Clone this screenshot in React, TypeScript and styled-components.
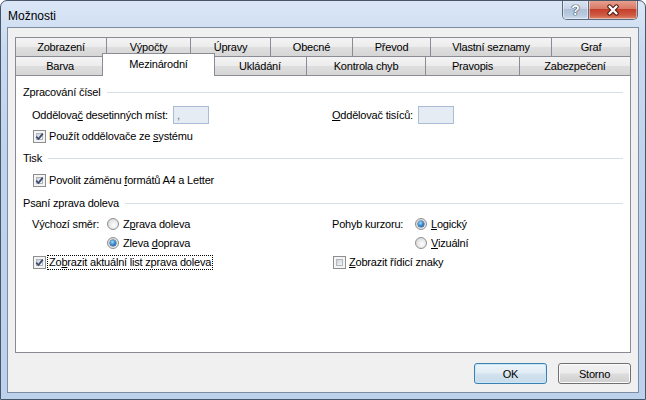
import React from "react";
import styled, { createGlobalStyle } from "styled-components";

const GlobalStyle = createGlobalStyle`
  html, body {
    margin: 0;
    padding: 0;
    background: #ffffff;
  }
  body {
    font-family: "Liberation Sans", Arial, sans-serif;
    font-size: 11px;
    letter-spacing: -0.2px;
    color: #000;
  }
`;

const Window = styled.div`
  width: 646px;
  height: 400px;
  box-sizing: border-box;
  border: 1px solid #48566a;
  border-radius: 7px 7px 0 0;
  background: linear-gradient(180deg, #dbe7f6 0%, #c9daf0 12%, #bfd3ed 40%, #bcd1ec 100%);
  display: flex;
  flex-direction: column;
  overflow: hidden;
`;

const TitleBar = styled.div`
  height: 26px;
  display: flex;
  align-items: flex-start;
  padding: 0 6px 0 7px;
  flex: none;
`;

const Title = styled.div`
  flex: 1;
  margin-top: 7px;
  font-size: 12px;
  letter-spacing: 0;
  line-height: 16px;
  color: #000;
`;

const Captions = styled.div`
  display: flex;
  margin-top: -1px;
  margin-right: 1px;
  border: 1px solid #5b6a7e;
  border-top: none;
  border-radius: 0 0 5px 5px;
  overflow: hidden;
`;

const CaptionButton = styled.div<{ $close?: boolean }>`
  width: ${(p) => (p.$close ? 48 : 25)}px;
  height: 19px;
  display: flex;
  align-items: center;
  justify-content: center;
  box-shadow: inset 0 0 0 1px rgba(255, 255, 255, 0.45);
  background: ${(p) =>
    p.$close
      ? "linear-gradient(180deg, #e9a593 0%, #d87a66 45%, #c63f2b 50%, #cf5a43 80%, #e0876b 100%)"
      : "linear-gradient(180deg, #dde7f3 0%, #c6d4e6 45%, #aebfd6 50%, #b9cbe1 80%, #cfdcec 100%)"};
  & + & {
    border-left: 1px solid #5b6a7e;
  }
`;

const HelpGlyph = styled.span`
  font-family: "Liberation Sans", Arial, sans-serif;
  font-weight: bold;
  font-size: 14px;
  line-height: 14px;
  color: #ffffff;
  text-shadow: 0 0 1px #2c3a4c, 0 0 1px #2c3a4c, 0 0 1px #2c3a4c;
`;

const Client = styled.div`
  flex: 1;
  margin: 0 6px 6px 6px;
  border: 1px solid #7d8ca2;
  background: #f0f0f0;
  padding: 9px 7px 0 7px;
  display: flex;
  flex-direction: column;
`;

const TabRow = styled.div`
  display: flex;
  height: 19px;
  flex: none;
`;

const Tab = styled.div<{ $w: number; $active?: boolean; $last?: boolean }>`
  box-sizing: border-box;
  flex: none;
  width: ${(p) => (p.$active ? p.$w + 4 : p.$w)}px;
  height: ${(p) => (p.$active ? 23 : 19)}px;
  margin: ${(p) => (p.$active ? "-3px -2px -1px -2px" : "0")};
  position: relative;
  z-index: ${(p) => (p.$active ? 2 : 1)};
  border-top: 1px solid #898c95;
  border-left: 1px solid #898c95;
  border-right: ${(p) => (p.$last || p.$active ? "1px solid #898c95" : "none")};
  background: ${(p) =>
    p.$active
      ? "#ffffff"
      : "linear-gradient(180deg, #f4f4f4 0%, #ececec 48%, #dedede 52%, #d6d6d6 100%)"};
  display: flex;
  align-items: center;
  justify-content: center;
  padding-bottom: ${(p) => (p.$active ? 3 : 0)}px;
  white-space: nowrap;
  color: #000;
`;

const Panel = styled.div`
  box-sizing: border-box;
  height: 278px;
  flex: none;
  border: 1px solid #898c95;
  background: #ffffff;
  padding: 9px 7px 0 7px;
  display: flex;
  flex-direction: column;
`;

const Header = styled.div<{ $mt: number }>`
  display: flex;
  align-items: center;
  height: 14px;
  margin-top: ${(p) => p.$mt}px;
  white-space: nowrap;
`;

const Rule = styled.div`
  flex: 1;
  height: 1px;
  margin-left: 6px;
  background: #d8dfe4;
`;

const Row = styled.div<{ $h: number; $mt: number }>`
  display: grid;
  grid-template-columns: 300px 1fr;
  align-items: center;
  height: ${(p) => p.$h}px;
  margin-top: ${(p) => p.$mt}px;
  padding-left: 9px;
`;

const Field = styled.div`
  display: flex;
  align-items: center;
`;

const Label = styled.span<{ $w: number }>`
  display: inline-block;
  width: ${(p) => p.$w}px;
  flex: none;
  white-space: nowrap;
`;

const TextBox = styled.div`
  box-sizing: border-box;
  width: 36px;
  height: 18px;
  border: 1px solid #a9bcd6;
  background: #e6ecf4;
  padding: 1px 3px;
  line-height: 14px;
  color: #6d6d6d;
`;

const Option = styled.label`
  display: flex;
  align-items: center;
  white-space: nowrap;
`;

const Box = styled.span`
  box-sizing: border-box;
  width: 13px;
  height: 13px;
  margin-left: 1px;
  margin-right: 3px;
  border: 1px solid #8e8f8f;
  background: #f4f4f4;
  padding: 2px;
  display: flex;
  flex: none;
`;

const BoxInner = styled.span`
  flex: 1;
  border: 1px solid #b3b6bb;
  background: linear-gradient(135deg, #cdd1d7 0%, #e6e8eb 60%, #f7f7f7 100%);
  position: relative;
  display: flex;
  align-items: center;
  justify-content: center;
`;

const CheckMark = styled.svg`
  position: absolute;
  left: -2px;
  top: -2px;
`;

const Circle = styled.span<{ $on?: boolean }>`
  box-sizing: border-box;
  width: 12px;
  height: 12px;
  margin-right: 4px;
  border-radius: 50%;
  border: 1px solid #8e8f8f;
  background: radial-gradient(circle at 60% 60%, #ffffff 0%, #eaeaea 45%, #cfcfcf 100%);
  display: flex;
  align-items: center;
  justify-content: center;
  flex: none;
  &::after {
    content: "";
    display: ${(p) => (p.$on ? "block" : "none")};
    width: 6px;
    height: 6px;
    border-radius: 50%;
    background: radial-gradient(circle at 40% 35%, #a6e0fb 0%, #3c8ed0 45%, #0f3f7e 100%);
    box-shadow: 0 0 0 0.5px #1c4a80;
  }
`;

const Focus = styled.span`
  outline: 1px dotted #000;
  outline-offset: 0;
  padding: 0 1px 1px 1px;
  margin-left: -1px;
`;

const ButtonRow = styled.div`
  display: flex;
  justify-content: flex-end;
  gap: 11px;
  margin-top: 10px;
`;

const Button = styled.div<{ $default?: boolean }>`
  box-sizing: border-box;
  width: 73px;
  height: 21px;
  border-radius: 3px;
  border: 1px solid ${(p) => (p.$default ? "#3c7fb1" : "#707070")};
  box-shadow: inset 0 0 0 1px ${(p) => (p.$default ? "#c9e8f8" : "#fbfbfb")};
  background: ${(p) =>
    p.$default
      ? "linear-gradient(180deg, #ecf4f9 0%, #e1ecf4 48%, #d2e2ee 52%, #c8dbe9 100%)"
      : "linear-gradient(180deg, #f2f2f2 0%, #ebebeb 48%, #dddddd 52%, #cfcfcf 100%)"};
  display: flex;
  align-items: center;
  justify-content: center;
  color: #000;
`;

const rowOne = [
  { t: "Zobrazení", w: 91 },
  { t: "Výpočty", w: 84 },
  { t: "Úpravy", w: 80 },
  { t: "Obecné", w: 82 },
  { t: "Převod", w: 78 },
  { t: "Vlastní seznamy", w: 121 },
  { t: "Graf", w: 80 },
];

const rowTwo = [
  { t: "Barva", w: 89 },
  { t: "Mezinárodní", w: 109, active: true },
  { t: "Ukládání", w: 93 },
  { t: "Kontrola chyb", w: 119 },
  { t: "Pravopis", w: 94 },
  { t: "Zabezpečení", w: 112 },
];

function Check({ on, children }: { on?: boolean; children: React.ReactNode }) {
  return (
    <Option>
      <Box>
        <BoxInner>
          {on && (
            <CheckMark width="9" height="9" viewBox="0 0 9 9">
              <path d="M1.2 4.6 L3.5 7 L7.8 1.6" stroke="#3b4d74" strokeWidth="1.8" fill="none" />
            </CheckMark>
          )}
        </BoxInner>
      </Box>
      <span>{children}</span>
    </Option>
  );
}

function Radio({ on, children }: { on?: boolean; children: React.ReactNode }) {
  return (
    <Option>
      <Circle $on={on} />
      <span>{children}</span>
    </Option>
  );
}

export default function App() {
  return (
    <>
      <GlobalStyle />
      <Window>
        <TitleBar>
          <Title>Možnosti</Title>
          <Captions>
            <CaptionButton>
              <HelpGlyph>?</HelpGlyph>
            </CaptionButton>
            <CaptionButton $close>
              <svg width="14" height="12" viewBox="0 0 14 12">
                <path d="M3.5 2.5 L10.5 9.5 M10.5 2.5 L3.5 9.5" stroke="#4a1a12" strokeWidth="4.4" strokeLinecap="round" />
                <path d="M3.5 2.5 L10.5 9.5 M10.5 2.5 L3.5 9.5" stroke="#ffffff" strokeWidth="2.4" strokeLinecap="round" />
              </svg>
            </CaptionButton>
          </Captions>
        </TitleBar>
        <Client>
          <TabRow>
            {rowOne.map((t, i) => (
              <Tab key={t.t} $w={t.w} $last={i === rowOne.length - 1}>
                {t.t}
              </Tab>
            ))}
          </TabRow>
          <TabRow>
            {rowTwo.map((t, i) => (
              <Tab key={t.t} $w={t.w} $active={t.active} $last={i === rowTwo.length - 1}>
                {t.t}
              </Tab>
            ))}
          </TabRow>
          <Panel>
            <Header $mt={0}>
              Zpracování čísel
              <Rule />
            </Header>
            <Row $h={18} $mt={7}>
              <Field>
                <Label $w={141}>
                  Oddělova<u>č</u> desetinných míst:
                </Label>
                <TextBox>,</TextBox>
              </Field>
              <Field>
                <Label $w={86}>
                  <u>O</u>ddělovač tisíců:
                </Label>
                <TextBox />
              </Field>
            </Row>
            <Row $h={18} $mt={3}>
              <Check on>
                Použít oddělovače ze <u>s</u>ystému
              </Check>
            </Row>

            <Header $mt={6}>
              Tisk
              <Rule />
            </Header>
            <Row $h={18} $mt={6}>
              <Check on>
                Povolit záměnu <u>f</u>ormátů A4 a Letter
              </Check>
            </Row>

            <Header $mt={7}>
              Psaní zprava doleva
              <Rule />
            </Header>
            <Row $h={20} $mt={4}>
              <Field>
                <Label $w={75}>Výchozí směr:</Label>
                <Radio>
                  Z<u>p</u>rava doleva
                </Radio>
              </Field>
              <Field>
                <Label $w={83}>Pohyb kurzoru:</Label>
                <Radio on>
                  <u>L</u>ogický
                </Radio>
              </Field>
            </Row>
            <Row $h={18} $mt={0}>
              <Field>
                <Label $w={75} />
                <Radio on>
                  Zleva <u>d</u>oprava
                </Radio>
              </Field>
              <Field>
                <Label $w={83} />
                <Radio>
                  <u>V</u>izuální
                </Radio>
              </Field>
            </Row>
            <Row $h={18} $mt={1}>
              <Check on>
                <Focus>
                  Zo<u>b</u>razit aktuální list zprava doleva
                </Focus>
              </Check>
              <Check>
                <u>Z</u>obrazit řídicí znaky
              </Check>
            </Row>
          </Panel>
          <ButtonRow>
            <Button $default>OK</Button>
            <Button>Storno</Button>
          </ButtonRow>
        </Client>
      </Window>
    </>
  );
}
